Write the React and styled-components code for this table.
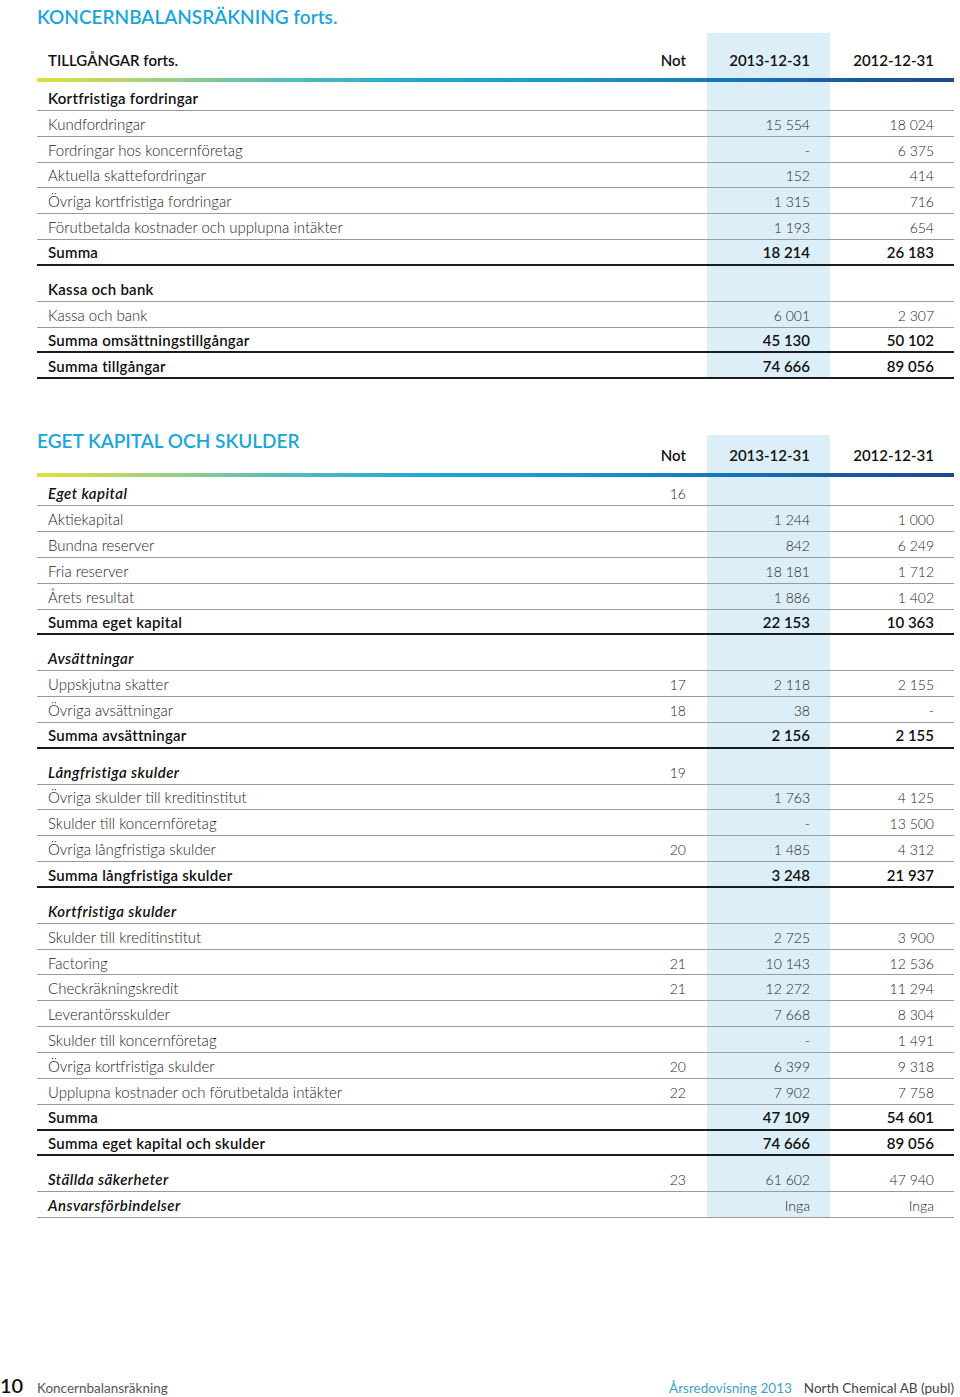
import React from "react";
import styled, { createGlobalStyle, css } from "styled-components";

const GlobalStyle = createGlobalStyle`
  html, body { margin: 0; padding: 0; background: #fff; }
  body { font-family: "Lato", "Noto Sans", sans-serif; color: #222; }
`;

const HL = "#dceff9";
const COLS = "1fr 120px 123px 124px";

const Page = styled.div`
  width: 960px;
  min-height: 1397px;
  box-sizing: border-box;
  display: flex;
  flex-direction: column;
  padding: 6px 6px 0 37px;
`;

const Title = styled.h1`
  margin: 0;
  font-size: 19px;
  line-height: 22px;
  font-weight: 600;
  color: #1ba6da;
`;

const Table = styled.section`
  margin-top: ${(p) => p.$mt}px;
  background-image: linear-gradient(${HL}, ${HL});
  background-repeat: no-repeat;
  background-size: 123px 100%;
  background-position: right 124px top;
`;

const HeaderRow = styled.div`
  display: grid;
  grid-template-columns: ${COLS};
  height: ${(p) => p.$h}px;
  align-items: end;
  box-sizing: border-box;
  padding-bottom: 9px;
`;

const HeaderLabel = styled.div`
  padding-left: 11px;
  font-size: 15px;
  font-weight: 600;
  color: #111;
  line-height: 18px;
`;

const SectionHeading = styled.h2`
  margin: 0;
  align-self: start;
  margin-top: -5px;
  font-size: 19px;
  line-height: 22px;
  font-weight: 600;
  color: #1ba6da;
`;

const HeaderCell = styled.div`
  text-align: right;
  padding-right: ${(p) => (p.$not ? 21 : 20)}px;
  font-size: 15px;
  font-weight: 600;
  color: #111;
  line-height: 18px;
`;

const GradientBar = styled.div`
  height: 4px;
  margin-bottom: 3px;
  background: linear-gradient(
    90deg,
    #e3df3b 0%,
    #a9d27c 12%,
    #5ebfb4 25%,
    #1fa8d8 42%,
    #1a97d0 58%,
    #1676bb 75%,
    #1b5aa0 88%,
    #1e4a8d 100%
  );
`;

const Row = styled.div`
  display: grid;
  grid-template-columns: ${COLS};
  align-items: center;
  height: 25.85px;
  box-sizing: border-box;
  padding-top: 2px;
  border-bottom: ${(p) => (p.$thick ? "2.6px solid #1c1c1c" : "1.4px solid #9a9a9a")};
  line-height: 17px;
  color: #1e1e1e;
  font-weight: 300;
  margin-bottom: ${(p) => (p.$gapAfter ? 10 : 0)}px;
`;

const Label = styled.div`
  padding-left: 11px;
  white-space: nowrap;
  font-size: 15px;
  ${(p) =>
    p.$strong &&
    css`
      font-weight: 600;
      color: #111;
      letter-spacing: 0.25px;
    `}
  ${(p) =>
    p.$italic &&
    css`
      font-style: italic;
      letter-spacing: 0.45px;
    `}
`;

const Num = styled.div`
  text-align: right;
  padding-right: ${(p) => (p.$not ? 21 : 20)}px;
  white-space: nowrap;
  font-size: 14px;
  ${(p) =>
    p.$strong &&
    css`
      font-size: 15px;
      font-weight: 600;
      color: #111;
    `}
`;

const Footer = styled.footer`
  margin-top: auto;
  margin-left: -37px;
  display: flex;
  align-items: baseline;
  padding-bottom: 2px;
  height: 24px;
  box-sizing: border-box;
`;

const PageNo = styled.span`
  width: 37px;
  font-size: 20px;
  font-weight: 600;
  color: #111;
`;

const FooterText = styled.span`
  font-size: 13.5px;
  color: ${(p) => p.$color || "#555"};
  font-weight: 400;
  margin-left: ${(p) => (p.$push ? "auto" : p.$ml ? p.$ml + "px" : "0")};
`;

// kinds: "head" (bold section label), "ihead" (italic bold label), "line", "sum" (bold thick), "iline" (italic bold label, light numbers)
const assets = [
  { k: "head", l: "Kortfristiga fordringar" },
  { k: "line", l: "Kundfordringar", a: "15 554", b: "18 024" },
  { k: "line", l: "Fordringar hos koncernföretag", a: "-", b: "6 375" },
  { k: "line", l: "Aktuella skattefordringar", a: "152", b: "414" },
  { k: "line", l: "Övriga kortfristiga fordringar", a: "1 315", b: "716" },
  { k: "line", l: "Förutbetalda kostnader och upplupna intäkter", a: "1 193", b: "654" },
  { k: "sum", l: "Summa", a: "18 214", b: "26 183", gap: true },
  { k: "head", l: "Kassa och bank" },
  { k: "line", l: "Kassa och bank", a: "6 001", b: "2 307" },
  { k: "sum", l: "Summa omsättningstillgångar", a: "45 130", b: "50 102" },
  { k: "sum", l: "Summa tillgångar", a: "74 666", b: "89 056" },
];

const equity = [
  { k: "ihead", l: "Eget kapital", n: "16" },
  { k: "line", l: "Aktiekapital", a: "1 244", b: "1 000" },
  { k: "line", l: "Bundna reserver", a: "842", b: "6 249" },
  { k: "line", l: "Fria reserver", a: "18 181", b: "1 712" },
  { k: "line", l: "Årets resultat", a: "1 886", b: "1 402" },
  { k: "sum", l: "Summa eget kapital", a: "22 153", b: "10 363", gap: true },
  { k: "ihead", l: "Avsättningar" },
  { k: "line", l: "Uppskjutna skatter", n: "17", a: "2 118", b: "2 155" },
  { k: "line", l: "Övriga avsättningar", n: "18", a: "38", b: "-" },
  { k: "sum", l: "Summa avsättningar", a: "2 156", b: "2 155", gap: true },
  { k: "ihead", l: "Långfristiga skulder", n: "19" },
  { k: "line", l: "Övriga skulder till kreditinstitut", a: "1 763", b: "4 125" },
  { k: "line", l: "Skulder till koncernföretag", a: "-", b: "13 500" },
  { k: "line", l: "Övriga långfristiga skulder", n: "20", a: "1 485", b: "4 312" },
  { k: "sum", l: "Summa långfristiga skulder", a: "3 248", b: "21 937", gap: true },
  { k: "ihead", l: "Kortfristiga skulder" },
  { k: "line", l: "Skulder till kreditinstitut", a: "2 725", b: "3 900" },
  { k: "line", l: "Factoring", n: "21", a: "10 143", b: "12 536" },
  { k: "line", l: "Checkräkningskredit", n: "21", a: "12 272", b: "11 294" },
  { k: "line", l: "Leverantörsskulder", a: "7 668", b: "8 304" },
  { k: "line", l: "Skulder till koncernföretag", a: "-", b: "1 491" },
  { k: "line", l: "Övriga kortfristiga skulder", n: "20", a: "6 399", b: "9 318" },
  { k: "line", l: "Upplupna kostnader och förutbetalda intäkter", n: "22", a: "7 902", b: "7 758" },
  { k: "sum", l: "Summa", a: "47 109", b: "54 601" },
  { k: "sum", l: "Summa eget kapital och skulder", a: "74 666", b: "89 056", gap: true },
  { k: "iline", l: "Ställda säkerheter", n: "23", a: "61 602", b: "47 940" },
  { k: "iline", l: "Ansvarsförbindelser", a: "Inga", b: "Inga" },
];

function DataRow({ r }) {
  const strongLabel = r.k !== "line";
  const italic = r.k === "ihead" || r.k === "iline";
  const strongNum = r.k === "sum";
  return (
    <Row $thick={r.k === "sum"} $gapAfter={r.gap}>
      <Label $strong={strongLabel} $italic={italic}>{r.l}</Label>
      <Num $not>{r.n || ""}</Num>
      <Num $strong={strongNum}>{r.a || ""}</Num>
      <Num $strong={strongNum}>{r.b || ""}</Num>
    </Row>
  );
}

function ColumnHeads() {
  return (
    <>
      <HeaderCell $not>Not</HeaderCell>
      <HeaderCell>2013-12-31</HeaderCell>
      <HeaderCell>2012-12-31</HeaderCell>
    </>
  );
}

export default function App() {
  return (
    <>
      <GlobalStyle />
      <Page>
        <Title>KONCERNBALANSRÄKNING forts.</Title>

        <Table $mt={5}>
          <HeaderRow $h={45}>
            <HeaderLabel>TILLGÅNGAR forts.</HeaderLabel>
            <ColumnHeads />
          </HeaderRow>
          <GradientBar />
          {assets.map((r, i) => (
            <DataRow key={i} r={r} />
          ))}
        </Table>

        <Table $mt={56}>
          <HeaderRow $h={38}>
            <SectionHeading>EGET KAPITAL OCH SKULDER</SectionHeading>
            <ColumnHeads />
          </HeaderRow>
          <GradientBar />
          {equity.map((r, i) => (
            <DataRow key={i} r={r} />
          ))}
        </Table>

        <Footer>
          <PageNo>10</PageNo>
          <FooterText>Koncernbalansräkning</FooterText>
          <FooterText $push $color="#3aa3c8">Årsredovisning 2013</FooterText>
          <FooterText $ml={12} $color="#444">North Chemical AB (publ)</FooterText>
        </Footer>
      </Page>
    </>
  );
}
